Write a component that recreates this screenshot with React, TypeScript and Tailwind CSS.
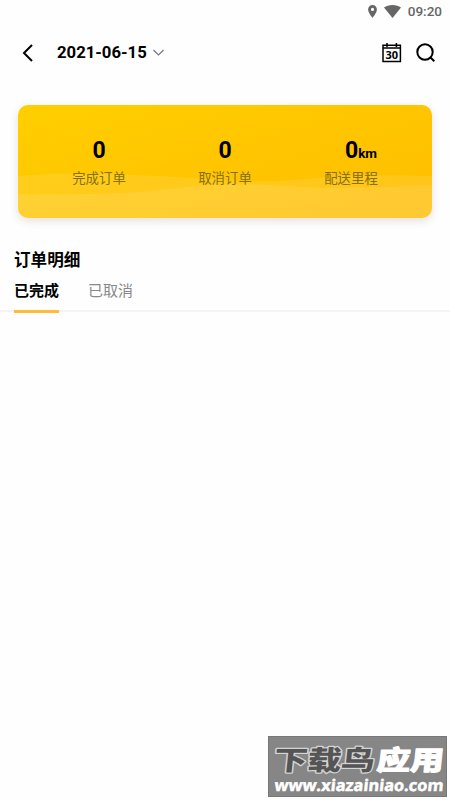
import React, { useState } from "react";

type Stat = {
  label: string;
  value: string;
  unit?: string;
};

const stats: Stat[] = [
  { label: "完成订单", value: "0" },
  { label: "取消订单", value: "0" },
  { label: "配送里程", value: "0", unit: "km" },
];

const tabs = ["已完成", "已取消"];

const StatusBar = () => {
  return (
    <div className="flex h-6 items-center justify-end pr-2 text-[#666]">
      <svg
        className="-mt-px"
        width="9"
        height="13"
        viewBox="0 0 9 13"
        fill="currentColor"
      >
        <path
          fillRule="evenodd"
          d="M4.5 0A4.4 4.4 0 0 0 .1 4.4C.1 7.6 4.5 12.8 4.5 12.8S8.9 7.6 8.9 4.4A4.4 4.4 0 0 0 4.5 0Zm0 2.8a1.6 1.6 0 1 1 0 3.2 1.6 1.6 0 0 1 0-3.2Z"
        />
      </svg>
      <svg
        className="-mt-[2px] ml-[7px]"
        width="17"
        height="13"
        viewBox="0 0 17 13"
        fill="currentColor"
      >
        <path d="M8.5 13 0 2.6C2.3.9 5.2 0 8.5 0S14.7.9 17 2.6Z" />
      </svg>
      <span className="ml-[7px] text-[13.5px] leading-none font-medium">
        09:20
      </span>
    </div>
  );
};

const Header = () => {
  return (
    <div className="flex h-[57px] items-center pr-[14px] pl-[22px]">
      <button>
        <svg
          width="12"
          height="18"
          viewBox="0 0 12 18"
          fill="none"
          stroke="#000"
          strokeWidth="2"
        >
          <path d="M10 1 2 9l8 8" />
        </svg>
      </button>
      <button className="ml-[23px] flex items-center">
        <span className="text-[16.7px] font-bold">2021-06-15</span>
        <svg
          className="ml-[6px]"
          width="11"
          height="7"
          viewBox="0 0 11 7"
          fill="none"
          stroke="#777"
          strokeWidth="1.2"
        >
          <path d="m.5 1 5 5 5-5" />
        </svg>
      </button>
      <button className="ml-auto">
        <svg width="20" height="20" viewBox="0 0 20 20" fill="none">
          <path
            d="M1 2.3h17.4v16.3H1ZM1 5h17.400"
            stroke="#000"
            strokeWidth="1.5"
          />
          <path d="M5 0v4M14.4 0v4" stroke="#000" strokeWidth="1.5" />
          <text
            x="9.7"
            y="15.8"
            textAnchor="middle"
            fontSize="11"
            fontWeight="bold"
            fontFamily="Open Sans, sans-serif"
            fill="#000"
          >
            30
          </text>
        </svg>
      </button>
      <button className="ml-[14px]">
        <svg
          width="20"
          height="20"
          viewBox="0 0 20 20"
          fill="none"
          stroke="#000"
          strokeWidth="2"
        >
          <circle cx="9" cy="9" r="7.7" />
          <path d="m14.3 14.3 4 4" />
        </svg>
      </button>
    </div>
  );
};

const SummaryCard = () => {
  return (
    <div className="relative mx-[18px] mt-6 h-[113px] overflow-hidden rounded-[10px] bg-linear-to-br from-[#ffcf00] to-[#ffbc00] shadow-[0_3px_9px_rgba(90,60,40,0.15)]">
      <svg
        className="absolute inset-0"
        width="414"
        height="113"
        viewBox="0 0 414 113"
        fill="#fff"
      >
        <path
          fillOpacity="0.1"
          d="M0 71C45 67 90 69 140 71s90 8 135 4 80-6 139-4v42H0Z"
        />
        <path
          fillOpacity="0.1"
          d="M0 89C60 90 110 89 150 84s75-6 115-3 85 2 149-1v33H0Z"
        />
      </svg>
      <div className="relative grid grid-cols-3 px-[18px] pt-8">
        {stats.map((stat) => (
          <div key={stat.label} className="flex flex-col items-center">
            <div className="flex h-7 w-[54px] items-baseline justify-center whitespace-nowrap text-black">
              <span
                className={`text-[23px] leading-7 font-bold ${
                  stat.unit ? "ml-5" : ""
                }`}
              >
                {stat.value}
              </span>
              {stat.unit ? (
                <span className="text-[13.5px] font-bold">{stat.unit}</span>
              ) : (
                <></>
              )}
            </div>
            <p className="mt-1 text-[13.4px] leading-5 text-[#86700c]">
              {stat.label}
            </p>
          </div>
        ))}
      </div>
    </div>
  );
};

const Watermark = () => {
  return (
    <div className="absolute top-[736px] left-[268px] h-[61px] w-[179px] overflow-hidden border border-[#777] bg-[#868686]">
      <svg width="177" height="59" viewBox="0 0 177 59">
        <g
          fontFamily="Noto Sans CJK SC, sans-serif"
          fontWeight="900"
          fontSize="27"
          paintOrder="stroke"
          strokeLinejoin="round"
          transform="translate(4 33) skewX(-6)"
        >
          <text
            textLength="101"
            lengthAdjust="spacingAndGlyphs"
            fill="#555"
            stroke="#d4d4d4"
            strokeWidth="2.5"
          >
            下载鸟
          </text>
          <text
            x="103"
            textLength="67"
            lengthAdjust="spacingAndGlyphs"
            fill="#fff"
            stroke="#fff"
            strokeWidth="1"
          >
            应用
          </text>
        </g>
        <text
          transform="translate(5 54) skewX(-6)"
          textLength="169"
          lengthAdjust="spacingAndGlyphs"
          fontFamily="Open Sans, sans-serif"
          fontWeight="700"
          fontSize="16"
          fill="#fff"
          stroke="#fff"
          strokeWidth="0.5"
        >
          www.xiazainiao.com
        </text>
      </svg>
    </div>
  );
};

export default function App() {
  const [activeTab, setActiveTab] = useState(tabs[0]);

  return (
    <div className="relative h-[800px] w-[450px] overflow-hidden bg-[#fefefe] font-['Roboto','Noto_Sans_CJK_SC',sans-serif] text-black">
      <StatusBar />
      <Header />
      <SummaryCard />
      <h2 className="mt-[31px] ml-[14px] text-[16.6px] leading-6 font-bold">
        订单明细
      </h2>
      <div className="mt-[6px] flex h-[33px] gap-[29px] border-b-2 border-[#f5f3f3] pl-[14px]">
        {tabs.map((tab) => (
          <button
            key={tab}
            className={`h-[34px] border-b-[3px] pb-[7px] text-[15px] leading-6 ${
              tab === activeTab
                ? "border-[#ffbd35] font-bold text-black"
                : "border-transparent text-[#888]"
            }`}
            onClick={() => {
              setActiveTab(tab);
            }}
          >
            {tab}
          </button>
        ))}
      </div>
      <Watermark />
    </div>
  );
}
